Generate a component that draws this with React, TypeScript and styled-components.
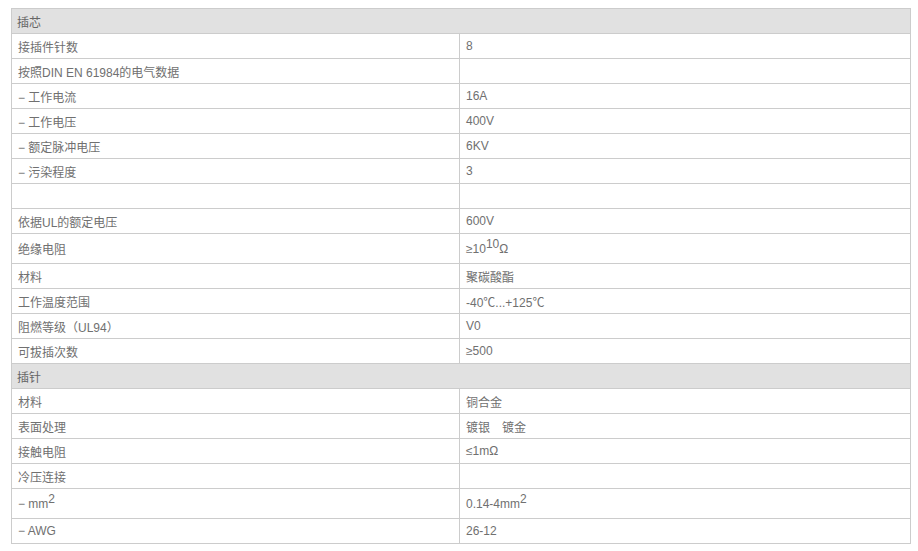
import styled, {createGlobalStyle} from "styled-components";

const GlobalStyle = createGlobalStyle`
  body {
    margin: 0;
    background: #ffffff;
    font-family: "Liberation Sans", Arial, "Noto Sans CJK SC", sans-serif;
  }
`

const Page = styled.div`
  padding: 8px 7px 0 11px;
`

const Table = styled.table`
  width: 900px;
  border-collapse: collapse;
  table-layout: fixed;
  font-size: 12px;
  color: #707070;
`

const Row = styled.tr<{ $tall?: boolean }>`
  height: ${props => props.$tall ? 30 : 25}px;
`

const Section = styled.td`
  background: #e1e1e1;
  border: 1px solid #cccccc;
  padding: 0 5px;
  color: #666666;
`

const Cell = styled.td`
  border: 1px solid #cccccc;
  padding: 0 6px;
  vertical-align: middle;
  white-space: nowrap;
`

const Sup = styled.sup`
  font-size: 12px;
  line-height: 0;
`

interface Spec {
    label: React.ReactNode;
    value: React.ReactNode;
    tall?: boolean;
}

const plug: Spec[] = [
    {label: "接插件针数", value: "8"},
    {label: "按照DIN EN 61984的电气数据", value: ""},
    {label: "− 工作电流", value: "16A"},
    {label: "− 工作电压", value: "400V"},
    {label: "− 额定脉冲电压", value: "6KV"},
    {label: "− 污染程度", value: "3"},
    {label: "", value: ""},
    {label: "依据UL的额定电压", value: "600V"},
    {label: "绝缘电阻", value: <>≥10<Sup>10</Sup>Ω</>, tall: true},
    {label: "材料", value: "聚碳酸酯"},
    {label: "工作温度范围", value: "-40℃...+125℃"},
    {label: "阻燃等级（UL94）", value: "V0"},
    {label: "可拔插次数", value: "≥500"},
]

const pins: Spec[] = [
    {label: "材料", value: "铜合金"},
    {label: "表面处理", value: "镀银　镀金"},
    {label: "接触电阻", value: "≤1mΩ"},
    {label: "冷压连接", value: ""},
    {label: <>− mm<Sup>2</Sup></>, value: <>0.14-4mm<Sup>2</Sup></>, tall: true},
    {label: "− AWG", value: "26-12"},
]

function SpecRows({title, rows}: { title: string, rows: Spec[] }) {
    return (
        <>
            <Row>
                <Section colSpan={2}>{title}</Section>
            </Row>
            {rows.map((r, i) =>
                <Row key={i} $tall={r.tall}>
                    <Cell>{r.label}</Cell>
                    <Cell>{r.value}</Cell>
                </Row>
            )}
        </>
    )
}

export default function App() {
    return (
        <Page>
            <GlobalStyle/>
            <Table>
                <colgroup>
                    <col style={{width: 448}}/>
                    <col/>
                </colgroup>
                <tbody>
                    <SpecRows title="插芯" rows={plug}/>
                    <SpecRows title="插针" rows={pins}/>
                </tbody>
            </Table>
        </Page>
    )
}
